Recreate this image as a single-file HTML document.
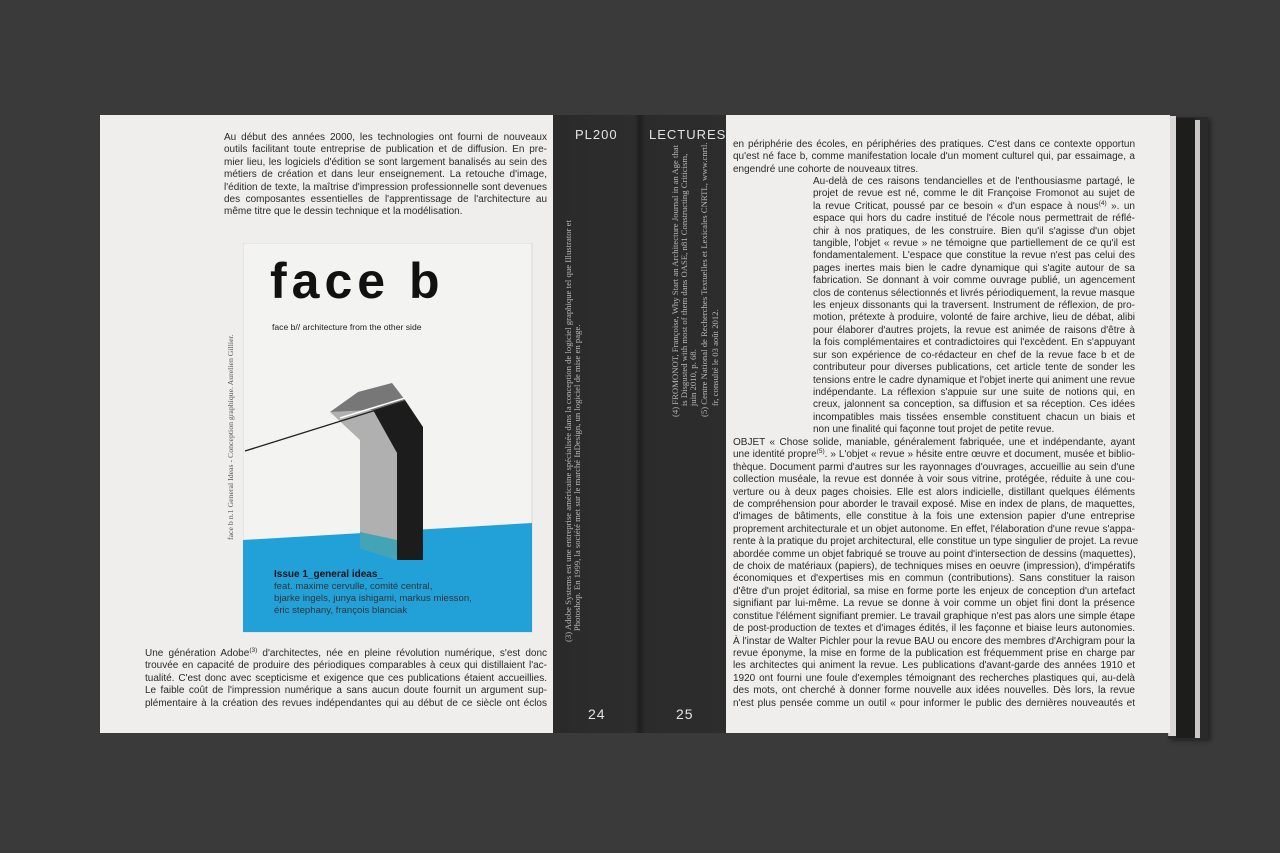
<!DOCTYPE html>
<html><head><meta charset="utf-8">
<style>
*{margin:0;padding:0;box-sizing:border-box}
body{width:1280px;height:853px;background:#3a3a3a;position:relative;overflow:hidden;font-family:"Liberation Sans",sans-serif}
.pg{position:absolute;background:#efeeec}
.txt{position:absolute;font-size:10px;line-height:12.4px;color:#2a2a2a}
.txt div{white-space:nowrap;text-align:justify;text-align-last:justify}
.txt div.l{text-align-last:left}
sup{font-size:6.5px;line-height:0;vertical-align:4px}
.sp{position:absolute;top:115px;height:618px}
.hd{position:absolute;color:#e4e4e4;font-size:13px;letter-spacing:1px}
.fn{position:absolute;font-family:"Liberation Serif",serif;font-size:8.7px;line-height:9px;color:#b8b8b8;transform:rotate(-90deg);transform-origin:0 0;white-space:nowrap}
</style></head><body>
<div style="position:absolute;left:1168px;top:117px;width:40px;height:622px;background:#2a2a2a;box-shadow:3px 2px 4px rgba(0,0,0,.4)"></div>
<div style="position:absolute;left:1168px;top:116px;width:8px;height:620px;background:#d9d8d5;border-left:1px solid #bbb"></div>
<div style="position:absolute;left:1195px;top:120px;width:5px;height:618px;background:#c9c8c4"></div>
<div style="position:absolute;left:1176px;top:118px;width:19px;height:620px;background:#1d1d1c"></div>
<div class="pg" style="left:100px;top:115px;width:453px;height:618px"></div>
<div class="pg" style="left:726px;top:115px;width:444px;height:618px"></div>
<div class="sp" style="left:553px;width:87px;background:linear-gradient(90deg,#2a2a2a,#2d2d2d 94%,#1e1e1e)"></div>
<div class="sp" style="left:640px;width:86px;background:linear-gradient(90deg,#1e1e1e,#2b2b2b 6%,#2d2d2d)"></div>
<div class="hd" style="left:575px;top:127px">PL200</div>
<div class="hd" style="left:649px;top:127px">LECTURES</div>
<div class="hd" style="left:588px;top:706px;font-size:14px">24</div>
<div class="hd" style="left:676px;top:706px;font-size:14px">25</div>
<div class="fn" style="left:564px;top:642px">(3) Adobe Systems est une entreprise américaine spécialisée dans la conception de logiciel graphique tel que Illustrator et<br>&nbsp;&nbsp;&nbsp;&nbsp;&nbsp;Photoshop. En 1999, la société met sur le marché InDesign, un logiciel de mise en page.</div>
<div class="fn" style="left:671px;top:417px">(4) FROMONOT, Françoise, Why Start an Architecture Journal in an Age that<br>&nbsp;&nbsp;&nbsp;&nbsp;&nbsp;is Disgusted with most of them dans OASE, n81 Constructing Criticism,<br>&nbsp;&nbsp;&nbsp;&nbsp;&nbsp;juin 2010, p. 68.<br><span style="line-height:13px">(5) Centre National de Recherches Textuelles et Lexicales CNRTL, www.cnrtl.</span><br>&nbsp;&nbsp;&nbsp;&nbsp;&nbsp;fr, consulté le 03 août 2012.</div>

<div class="txt" style="left:224px;top:132px;width:323px">
<div>Au début des années 2000, les technologies ont fourni de nouveaux</div>
<div>outils facilitant toute entreprise de publication et de diffusion. En pre-</div>
<div>mier lieu, les logiciels d'édition se sont largement banalisés au sein des</div>
<div>métiers de création et dans leur enseignement. La retouche d'image,</div>
<div>l'édition de texte, la maîtrise d'impression professionnelle sont devenues</div>
<div>des composantes essentielles de l'apprentissage de l'architecture au</div>
<div class="l">même titre que le dessin technique et la modélisation.</div>
</div>

<div class="txt" style="left:145px;top:648px;width:402px">
<div>Une génération Adobe<sup>(3)</sup> d'architectes, née en pleine révolution numérique, s'est donc</div>
<div>trouvée en capacité de produire des périodiques comparables à ceux qui distillaient l'ac-</div>
<div>tualité. C'est donc avec scepticisme et exigence que ces publications étaient accueillies.</div>
<div>Le faible coût de l'impression numérique a sans aucun doute fournit un argument sup-</div>
<div>plémentaire à la création des revues indépendantes qui au début de ce siècle ont éclos</div>
</div>

<div style="position:absolute;left:226px;top:540px;font-family:'Liberation Serif',serif;font-size:7.8px;color:#555;transform:rotate(-90deg);transform-origin:0 0;white-space:nowrap">face b n.1 General Ideas - Conception graphique. Aurelien Gillier.</div>
<svg style="position:absolute;left:243px;top:243px" width="290" height="390" viewBox="243 243 290 390">
<rect x="243" y="243" width="289" height="389" fill="#f3f3f1" stroke="#d8d8d8"/>
<polygon points="243,540 532,523 532,632 243,632" fill="#22a1d9"/>
<text x="270" y="298" font-family="Liberation Sans" font-weight="bold" font-size="50" letter-spacing="5" fill="#111">face b</text>
<text x="272" y="330" font-family="Liberation Sans" font-size="8.6" fill="#222">face b// architecture from the other side</text>
<polygon points="330,412 360,440 360,548 397,560 397,453 373,410" fill="#b0b0b0"/>
<polygon points="373,410 405,400 423,427 423,560 397,560 397,453" fill="#1c1c1c"/>
<polygon points="330,412 358,392 392,383 405,400 373,410" fill="#777"/>
<polygon points="360,532 397,540 397,560 360,548" fill="#2aa0b8" opacity=".8"/>
<line x1="245" y1="451" x2="405" y2="401" stroke="#222" stroke-width="1.4"/>
<line x1="340" y1="418" x2="405" y2="398" stroke="#fff" stroke-width="1.5"/>
<text x="274" y="577" font-family="Liberation Sans" font-weight="bold" font-size="10" fill="#111">Issue 1_general ideas_</text>
<text font-family="Liberation Sans" font-size="9.6" fill="#333"><tspan x="274" y="589">feat. maxime cervulle, comité central,</tspan><tspan x="274" y="601">bjarke ingels, junya ishigami, markus miesson,</tspan><tspan x="274" y="613">éric stephany, françois blanciak</tspan></text>
</svg>

<div class="txt" style="left:733px;top:139px;width:402px">
<div>en périphérie des écoles, en périphéries des pratiques. C'est dans ce contexte opportun</div>
<div>qu'est né face b, comme manifestation locale d'un moment culturel qui, par essaimage, a</div>
<div class="l">engendré une cohorte de nouveaux titres.</div>
</div>
<div class="txt" style="left:813px;top:176px;width:322px">
<div>Au-delà de ces raisons tendancielles et de l'enthousiasme partagé, le</div>
<div>projet de revue est né, comme le dit Françoise Fromonot au sujet de</div>
<div>la revue Criticat, poussé par ce besoin « d'un espace à nous<sup>(4)</sup> ». un</div>
<div>espace qui hors du cadre institué de l'école nous permettrait de réflé-</div>
<div>chir à nos pratiques, de les construire. Bien qu'il s'agisse d'un objet</div>
<div>tangible, l'objet « revue » ne témoigne que partiellement de ce qu'il est</div>
<div>fondamentalement. L'espace que constitue la revue n'est pas celui des</div>
<div>pages inertes mais bien le cadre dynamique qui s'agite autour de sa</div>
<div>fabrication. Se donnant à voir comme ouvrage publié, un agencement</div>
<div>clos de contenus sélectionnés et livrés périodiquement, la revue masque</div>
<div>les enjeux dissonants qui la traversent. Instrument de réflexion, de pro-</div>
<div>motion, prétexte à produire, volonté de faire archive, lieu de débat, alibi</div>
<div>pour élaborer d'autres projets, la revue est animée de raisons d'être à</div>
<div>la fois complémentaires et contradictoires qui l'excèdent. En s'appuyant</div>
<div>sur son expérience de co-rédacteur en chef de la revue face b et de</div>
<div>contributeur pour diverses publications, cet article tente de sonder les</div>
<div>tensions entre le cadre dynamique et l'objet inerte qui animent une revue</div>
<div>indépendante. La réflexion s'appuie sur une suite de notions qui, en</div>
<div>creux, jalonnent sa conception, sa diffusion et sa réception. Ces idées</div>
<div>incompatibles mais tissées ensemble constituent chacun un biais et</div>
<div class="l">non une finalité qui façonne tout projet de petite revue.</div>
</div>
<div class="txt" style="left:733px;top:437px;width:402px">
<div>OBJET « Chose solide, maniable, généralement fabriquée, une et indépendante, ayant</div>
<div>une identité propre<sup>(5)</sup>. » L'objet « revue » hésite entre œuvre et document, musée et biblio-</div>
<div>thèque. Document parmi d'autres sur les rayonnages d'ouvrages, accueillie au sein d'une</div>
<div>collection muséale, la revue est donnée à voir sous vitrine, protégée, réduite à une cou-</div>
<div>verture ou à deux pages choisies. Elle est alors indicielle, distillant quelques éléments</div>
<div>de compréhension pour aborder le travail exposé. Mise en index de plans, de maquettes,</div>
<div>d'images de bâtiments, elle constitue à la fois une extension papier d'une entreprise</div>
<div>proprement architecturale et un objet autonome. En effet, l'élaboration d'une revue s'appa-</div>
<div>rente à la pratique du projet architectural, elle constitue un type singulier de projet. La revue</div>
<div>abordée comme un objet fabriqué se trouve au point d'intersection de dessins (maquettes),</div>
<div>de choix de matériaux (papiers), de techniques mises en oeuvre (impression), d'impératifs</div>
<div>économiques et d'expertises mis en commun (contributions). Sans constituer la raison</div>
<div>d'être d'un projet éditorial, sa mise en forme porte les enjeux de conception d'un artefact</div>
<div>signifiant par lui-même. La revue se donne à voir comme un objet fini dont la présence</div>
<div>constitue l'élément signifiant premier. Le travail graphique n'est pas alors une simple étape</div>
<div>de post-production de textes et d'images édités, il les façonne et biaise leurs autonomies.</div>
<div>À l'instar de Walter Pichler pour la revue BAU ou encore des membres d'Archigram pour la</div>
<div>revue éponyme, la mise en forme de la publication est fréquemment prise en charge par</div>
<div>les architectes qui animent la revue. Les publications d'avant-garde des années 1910 et</div>
<div>1920 ont fourni une foule d'exemples témoignant des recherches plastiques qui, au-delà</div>
<div>des mots, ont cherché à donner forme nouvelle aux idées nouvelles. Dès lors, la revue</div>
<div>n'est plus pensée comme un outil « pour informer le public des dernières nouveautés et</div>
</div>
</body></html>
